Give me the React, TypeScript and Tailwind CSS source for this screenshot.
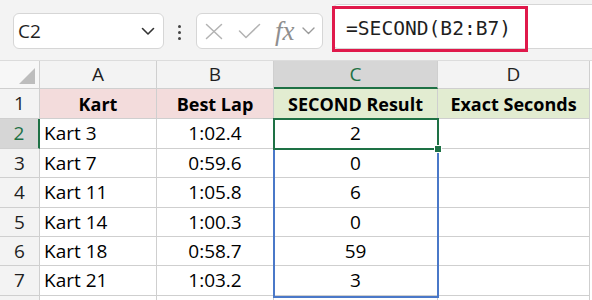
import React from "react";

const cols = [40, 117, 117, 164, 152];
const rowHeights = [30, 29, 30, 29, 29, 30];

const data: [string, string, string][] = [
  ["Kart 3", "1:02.4", "2"],
  ["Kart 7", "0:59.6", "0"],
  ["Kart 11", "1:05.8", "6"],
  ["Kart 14", "1:00.3", "0"],
  ["Kart 18", "0:58.7", "59"],
  ["Kart 21", "1:03.2", "3"],
];

function Toolbar() {
  return (
    <div className="relative flex h-[61px] shrink-0 items-start border-b border-[#dcdcdc] bg-[#f3f3f3]">
      {/* name box */}
      <div className="ml-[13px] mt-[13px] flex h-[36px] w-[151px] items-center justify-between rounded-[6px] border border-[#d6d6d6] bg-white pl-[4px] pr-[8px]">
        <span className="text-[19px] leading-none text-[#1f1f1f]">C2</span>
        <svg width="14" height="9" viewBox="0 0 14 9" fill="none">
          <path d="M1.5 1.5 L7 7 L12.5 1.5" stroke="#333" strokeWidth="1.6" strokeLinecap="round" strokeLinejoin="round" />
        </svg>
      </div>
      {/* dots */}
      <div className="ml-[14px] mt-[25px] flex w-[4px] flex-col gap-[3px]">
        <span className="h-[3px] w-[3px] rounded-full bg-[#444]" />
        <span className="h-[3px] w-[3px] rounded-full bg-[#444]" />
        <span className="h-[3px] w-[3px] rounded-full bg-[#444]" />
      </div>
      {/* fx box */}
      <div className="ml-[14px] mt-[13px] flex h-[36px] w-[127px] items-center rounded-[6px] border border-[#d6d6d6] bg-white pl-[8px]">
        <svg width="18" height="17" viewBox="0 0 18 17" fill="none">
          <path d="M1.5 1.5 L16.5 15.5 M16.5 1.5 L1.5 15.5" stroke="#b3b3b3" strokeWidth="1.5" strokeLinecap="round" />
        </svg>
        <svg width="23" height="16" viewBox="0 0 23 16" fill="none" className="ml-[15px]">
          <path d="M1.5 8 L8 14.5 L21.5 1.5" stroke="#b3b3b3" strokeWidth="1.5" strokeLinecap="round" strokeLinejoin="round" />
        </svg>
        <span className="ml-[14px] font-['Liberation_Serif',serif] text-[27px] italic leading-none text-[#8f8f8f]">fx</span>
        <svg width="13" height="8" viewBox="0 0 13 8" fill="none" className="ml-[7px]">
          <path d="M1 1 L6.5 6.5 L12 1" stroke="#9a9a9a" strokeWidth="1.4" strokeLinecap="round" strokeLinejoin="round" />
        </svg>
      </div>
      {/* formula input */}
      <div className="ml-[9px] mt-[4px] flex h-[45px] flex-1 items-start rounded-l-[6px] border border-r-0 border-[#d6d6d6] bg-white">
        <div className="-ml-px mt-px flex h-[46px] w-[196px] items-center border-[3px] border-[#e0194b] pl-[11px]">
          <span className="font-['DejaVu_Sans_Mono','Liberation_Mono',monospace] text-[19.6px] leading-none text-[#1f1f1f]">
            =SECOND(B2:B7)
          </span>
        </div>
      </div>
    </div>
  );
}

function Grid() {
  const template = cols.map((c) => `${c}px`).join(" ");
  const cell = "flex items-center border-r border-b border-[#cfcfcf] text-[19px] leading-none text-black";
  const head = "flex items-center justify-center border-r border-b border-[#cfcfcf] text-[18px] leading-none font-bold text-black";
  return (
    <div className="relative">
      <div className="grid" style={{ gridTemplateColumns: template }}>
        {/* column headers */}
        <div className="relative h-[28px] border-r border-b border-[#cfcfcf] bg-[#f7f7f7]">
          <svg width="16" height="16" viewBox="0 0 16 16" className="absolute bottom-[4px] right-[4px]">
            <path d="M16 0 L16 16 L0 16 Z" fill="#bdbdbd" />
          </svg>
        </div>
        {["A", "B", "C", "D"].map((l) => (
          <div
            key={l}
            className={
              l === "C"
                ? "flex h-[28px] items-center justify-center border-r border-b-2 border-r-[#cfcfcf] border-b-[#1e7145] bg-[#d6d6d6] text-[19px] text-[#1e7145]"
                : "flex h-[28px] items-center justify-center border-r border-b border-[#cfcfcf] bg-[#f3f3f3] text-[19px] text-[#1f1f1f]"
            }
          >
            {l}
          </div>
        ))}
        {/* row 1 */}
        <div className="flex h-[30px] items-center justify-center border-r border-b border-[#cfcfcf] bg-[#f3f3f3] text-[19px] text-[#1f1f1f]">
          1
        </div>
        <div className={`${head} h-[30px] bg-[#f3dcdc]`}>Kart</div>
        <div className={`${head} h-[30px] bg-[#f3dcdc]`}>Best Lap</div>
        <div className={`${head} h-[30px] bg-[#e2ecd1]`}>SECOND Result</div>
        <div className={`${head} h-[30px] bg-[#e2ecd1]`}>Exact Seconds</div>
        {data.map((r, i) => (
          <React.Fragment key={i}>
            <div
              className={
                i === 0
                  ? "flex items-center justify-center border-r-2 border-b border-r-[#1e7145] border-b-[#cfcfcf] bg-[#d6d6d6] text-[19px] text-[#1e7145]"
                  : "flex items-center justify-center border-r border-b border-[#cfcfcf] bg-[#f3f3f3] text-[19px] text-[#1f1f1f]"
              }
              style={{ height: rowHeights[i] }}
            >
              {i + 2}
            </div>
            <div className={`${cell} bg-white pl-[4px]`}>{r[0]}</div>
            <div className={`${cell} justify-center bg-white`}>{r[1]}</div>
            <div className={`${cell} justify-center bg-white`}>{r[2]}</div>
            <div className={`${cell} bg-white`} />
          </React.Fragment>
        ))}
        <div className="h-[10px] border-r border-[#cfcfcf] bg-[#f3f3f3]" />
        <div className="h-[10px] border-r border-[#cfcfcf] bg-white" />
        <div className="h-[10px] border-r border-[#cfcfcf] bg-white" />
        <div className="h-[10px] border-r border-[#cfcfcf] bg-white" />
        <div className="h-[10px] border-r border-[#cfcfcf] bg-white" />
      </div>
      {/* blue range C3:C7 */}
      <div className="pointer-events-none absolute left-[273px] top-[87px] h-[150px] w-[166px] border-2 border-[#4a78c8]" />
      {/* active cell C2 */}
      <div className="pointer-events-none absolute left-[273px] top-[57px] h-[32px] w-[166px] border-2 border-[#1e7145]" />
      {/* fill handle */}
      <div className="pointer-events-none absolute left-[434px] top-[84px] h-[8px] w-[8px] border border-white bg-[#1e7145]" />
    </div>
  );
}

export default function App() {
  return (
    <div className="flex h-[300px] w-[592px] flex-col overflow-hidden bg-white font-['Open_Sans',sans-serif]">
      <Toolbar />
      <Grid />
    </div>
  );
}
